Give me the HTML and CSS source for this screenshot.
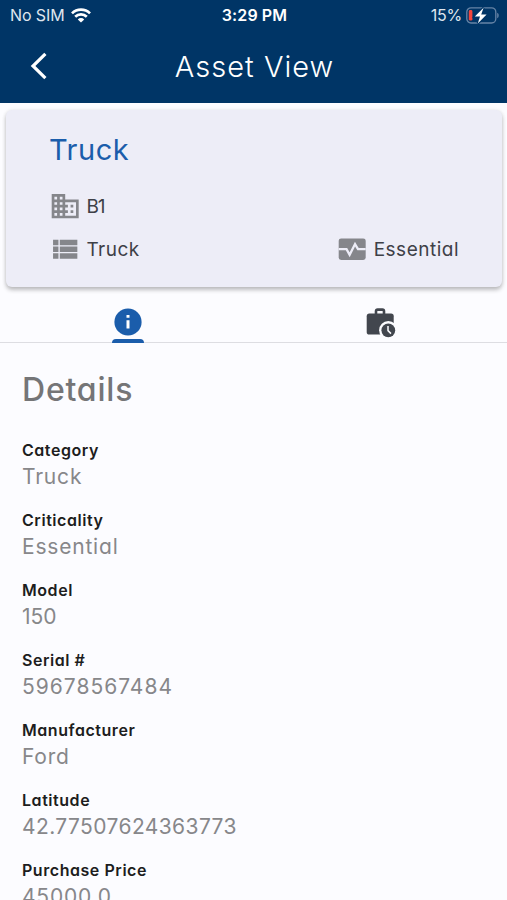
FILE: index.html
```
<!DOCTYPE html>
<html lang="en">
<head>
  <meta charset="UTF-8">
  <meta name="viewport" content="width=device-width, initial-scale=1.0">
  <title>Asset View</title>
  <link rel="stylesheet" href="styles.css">
</head>
<body>
  <header>
    <div class="status-bar">
      <div class="carrier">
        <span>No SIM</span>
        <svg width="20" height="15" viewBox="0 0 20 15" fill="none" stroke="#fff" stroke-width="2.7">
          <path d="M1 5.4a12.8 12.8 0 0 1 18 0"/>
          <path d="M4.2 8.8a8.2 8.2 0 0 1 11.6 0"/>
          <path d="M10 14.6 6.8 11.4a4.6 4.6 0 0 1 6.4 0Z" fill="#fff" stroke="none"/>
        </svg>
      </div>
      <div class="time">3:29 PM</div>
      <div class="battery">
        <span>15%</span>
        <svg width="33" height="17" viewBox="0 0 33 17">
          <rect x="0.8" y="0.8" width="29" height="15.2" rx="4.2" fill="none" stroke="#6684a6" stroke-width="1.3"/>
          <path d="M31.2 5.8c2 .8 2 4.6 0 5.4z" fill="#6684a6"/>
          <rect x="2.8" y="3" width="3.6" height="10.6" rx="1.4" fill="#f2453d"/>
          <path d="M17.6 0.8 8.8 9.6h5.2l-2.2 6.8 8.8-9h-5.4z" fill="#fff" stroke="#003566" stroke-width="2.4" paint-order="stroke"/>
        </svg>
      </div>
    </div>
    <div class="nav-bar">
      <svg class="back" width="18" height="28" viewBox="0 0 18 28" fill="none" stroke="#fff" stroke-width="3.2">
        <path d="M16.4 1.8 4 14l12.4 12.2"/>
      </svg>
      <h1>Asset View</h1>
    </div>
  </header>

  <section class="card">
    <h2>Truck</h2>
    <div class="row">
      <div class="item location">
        <svg width="32.4" height="32.4" viewBox="0 0 24 24" fill="#85868b">
          <path d="M18 15h-2v2h2m0-6h-2v2h2m2 6h-8v-2h2v-2h-2v-2h2v-2h-2V9h8M10 7H8V5h2m0 6H8V9h2m0 6H8v-2h2m0 6H8v-2h2M6 7H4V5h2m0 6H4V9h2m0 6H4v-2h2m0 6H4v-2h2m6-10V3H2v18h20V7H12z"/>
        </svg>
        <span>B1</span>
      </div>
    </div>
    <div class="row">
      <div class="item">
        <svg width="32.4" height="32.4" viewBox="0 0 24 24" fill="#85868b">
          <path d="M3 14h4v-4H3zM3 19h4v-4H3zM3 9h4V5H3zM8 14h13v-4H8zM8 19h13v-4H8zM8 5v4h13V5z"/>
        </svg>
        <span>Truck</span>
      </div>
      <div class="item">
        <svg width="32.4" height="32.4" viewBox="0 0 24 24">
          <rect x="2" y="4" width="20" height="16" rx="1.8" fill="#85868b"/>
          <path d="M2 12h5.8l2.3 4.2 4-8L16.3 12H22" fill="none" stroke="#ededf7" stroke-width="1.7"/>
        </svg>
        <span>Essential</span>
      </div>
    </div>
  </section>

  <nav class="tabs">
    <div class="tab active">
      <svg width="28" height="28" viewBox="0 0 28 28">
        <circle cx="14" cy="14" r="13.6" fill="#1b5dab"/>
        <path d="M12.5 6.9h3v2.8h-3zM12.5 12.2h3v8.4h-3z" fill="#fff"/>
      </svg>
    </div>
    <div class="tab">
      <svg width="30" height="30" viewBox="0 0 30 30">
        <path d="M10 6V3.2Q10 1.6 11.6 1.6h4.8Q18 1.6 18 3.2V6" fill="none" stroke="#42464e" stroke-width="2.6"/>
        <rect x="0.7" y="5.6" width="27" height="21" rx="2.6" fill="#42464e"/>
        <circle cx="22.3" cy="22.3" r="9.2" fill="#fcfcff"/>
        <circle cx="22.3" cy="22.3" r="6.9" fill="#42464e"/>
        <path d="M22 18v4.6l3 3" fill="none" stroke="#fcfcff" stroke-width="1.5"/>
      </svg>
    </div>
  </nav>

  <main>
    <h2>Details</h2>
    <dl>
      <dt>Category</dt>
      <dd>Truck</dd>
      <dt>Criticality</dt>
      <dd>Essential</dd>
      <dt>Model</dt>
      <dd class="short">150</dd>
      <dt>Serial #</dt>
      <dd class="serial">59678567484</dd>
      <dt>Manufacturer</dt>
      <dd>Ford</dd>
      <dt>Latitude</dt>
      <dd class="coordinate">42.77507624363773</dd>
      <dt>Purchase Price</dt>
      <dd>45000.0</dd>
    </dl>
  </main>
</body>
</html>
```

FILE: styles.css
```
body {
  font-family: Inter, sans-serif;
  font-feature-settings: "cv11";
  background: #fcfcff;
  margin: 0;
  height: 900px;
  overflow: hidden;
}
h1, h2, dl, dd {
  margin: 0;
}
svg {
  display: block;
  flex-shrink: 0;
}
header {
  background: #003566;
  color: #fff;
  height: 103px;
}
.status-bar {
  display: grid;
  grid-template-columns: 1fr auto 1fr;
  align-items: center;
  height: 30px;
  padding: 0 8px 0 10px;
  font-size: 16px;
  color: #dfe6ee;
}
.carrier, .battery {
  display: flex;
  align-items: center;
  gap: 6px;
}
.carrier {
  letter-spacing: -0.1px;
}
.battery {
  justify-content: flex-end;
  gap: 4px;
  letter-spacing: -0.2px;
}
.time {
  color: #fff;
  font-weight: 600;
  letter-spacing: 0.1px;
}
.nav-bar {
  display: grid;
  grid-template-columns: 60px 1fr 60px;
  align-items: center;
  height: 72px;
}
.back {
  margin-left: 29px;
}
h1 {
  text-align: center;
  font-size: 29px;
  font-weight: 300;
  letter-spacing: 1px;
  padding-left: 2px;
}
.card {
  margin: 7px 5px 0 6px;
  height: 177px;
  box-sizing: border-box;
  padding: 19px 43px 0 43px;
  background: #ededf7;
  border-radius: 6px;
  box-shadow: 0 3px 4px rgba(0, 0, 0, 0.24), 0 0 4px rgba(0, 0, 0, 0.08);
}
.card h2 {
  color: #1b5dab;
  font-size: 29px;
  font-weight: 400;
  line-height: 42px;
  letter-spacing: 0.5px;
  margin-bottom: 13px;
}
.row {
  display: flex;
  justify-content: space-between;
  height: 43px;
}
.item {
  display: flex;
  align-items: center;
  height: 44px;
  gap: 5px;
  color: #3e4047;
  font-size: 19px;
  letter-spacing: 0.5px;
}
.item.location {
  letter-spacing: -1px;
}
.tabs {
  display: grid;
  grid-template-columns: 1fr 1fr;
  height: 55px;
  padding-left: 1px;
  border-bottom: 1px solid #dddde2;
}
.tab {
  display: flex;
  flex-direction: column;
  align-items: center;
  padding: 21px 0 0 1px;
}
.tab.active::after {
  content: "";
  width: 32px;
  height: 4px;
  margin-top: 3px;
  background: #1b5dab;
  border-radius: 4px 4px 0 0;
}
main {
  padding: 22px 22px 0;
}
main h2 {
  color: #757577;
  font-size: 32px;
  font-weight: 500;
  line-height: 50px;
  letter-spacing: 0.8px;
  margin-bottom: 22px;
}
dt {
  color: #1d1d20;
  font-size: 16px;
  font-weight: 600;
  line-height: 26px;
  letter-spacing: 0.55px;
}
dd {
  color: #87878a;
  font-size: 21px;
  line-height: 27px;
  letter-spacing: 0.8px;
  margin-bottom: 17px;
}
dd.short {
  letter-spacing: 0;
}
dd.serial {
  letter-spacing: 1px;
}
dd.coordinate {
  letter-spacing: 0.4px;
}
```
